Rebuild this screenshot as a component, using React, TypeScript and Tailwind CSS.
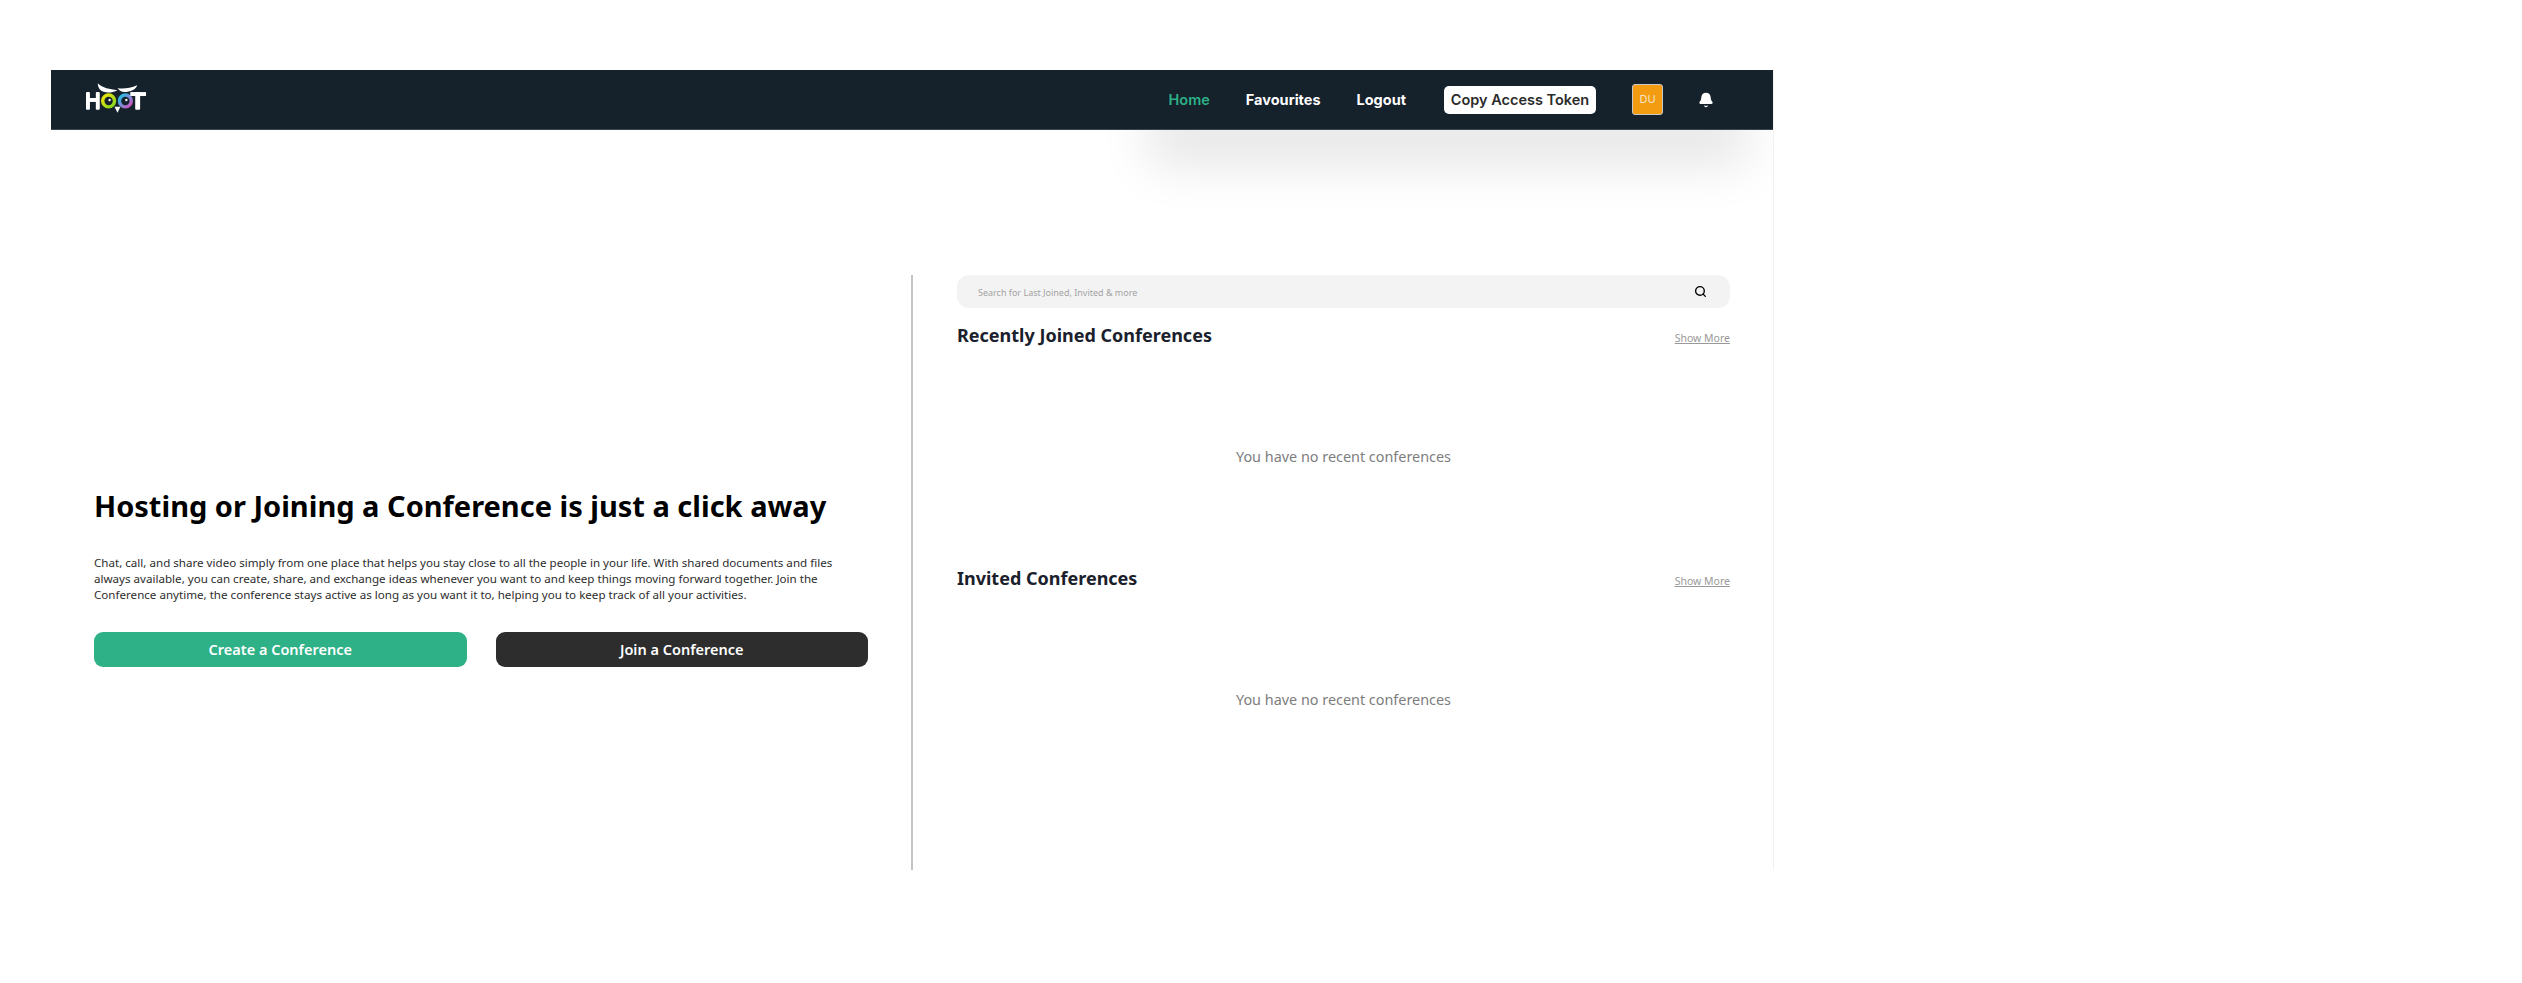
import React from 'react';
import { Search, Bell } from 'lucide-react';

const noto = { fontFamily: '"Noto Sans", sans-serif' };

function Logo() {
  return (
    <svg className="mb-[4px]" width="63" height="32" viewBox="0 0 64 32" fill="none">
      <defs>
        <linearGradient id="eyeLeft" x1="0" y1="0" x2="1" y2="1">
          <stop offset="0" stopColor="#f5e50a" />
          <stop offset="1" stopColor="#7ed321" />
        </linearGradient>
        <linearGradient id="eyeRight" x1="0" y1="0" x2="1" y2="1">
          <stop offset="0" stopColor="#19c6e6" />
          <stop offset="1" stopColor="#d94fc0" />
        </linearGradient>
      </defs>
      {/* H */}
      <rect x="1" y="10" width="4" height="18" rx="1" fill="#fff" />
      <rect x="11" y="10" width="4" height="18" rx="1" fill="#fff" />
      <rect x="4" y="16" width="8" height="4" fill="#fff" />
      {/* brows */}
      <path d="M13 1 C18 6 25 7 33 8 C28 11 20 11 17 9 C14 7 13 4 13 1Z" fill="#fff" />
      <path d="M33 6 C39 7 46 6 53 3 C52 7 46 10 40 10 C37 10 35 8 33 6Z" fill="#fff" />
      {/* eyes */}
      <circle cx="24" cy="19" r="6" stroke="url(#eyeLeft)" strokeWidth="3.5" />
      <circle cx="41" cy="19" r="6" stroke="url(#eyeRight)" strokeWidth="3.5" />
      <circle cx="24" cy="19" r="2.5" fill="#15212b" />
      <circle cx="41" cy="19" r="2.5" fill="#15212b" />
      <circle cx="25" cy="18" r="1.2" fill="#fff" />
      <circle cx="42" cy="18" r="1.2" fill="#fff" />
      <path d="M30 25 L36 25 L33 31Z" fill="#fff" />
      {/* T */}
      <rect x="46" y="10" width="16" height="4" fill="#fff" />
      <rect x="51" y="10" width="5" height="18" rx="1" fill="#fff" />
    </svg>
  );
}

function Section({ title }: { title: string }) {
  return (
    <div className="h-[243px]">
      <div className="flex items-center justify-between">
        <h2 className="text-[18px] leading-[26px] font-bold text-[#1a202c]">{title}</h2>
        <a className="text-[10.5px] leading-4 mt-[6px] text-[#999999] underline">Show More</a>
      </div>
      <p className="mt-[99px] text-center text-[14.4px] leading-5 text-[#7d7d7d]">You have no recent conferences</p>
    </div>
  );
}

export default function App() {
  return (
    <div className="min-h-[983px] bg-white pl-[51px] pt-[70px]">
      <div className="relative w-[1723px] h-[800px] overflow-hidden border-r border-[#f1f1f1]" style={noto}>
        {/* empty notification panel behind the header, only its shadow shows */}
        <div className="absolute right-[25px] top-0 w-[600px] h-[60px] shadow-[0_35px_50px_rgba(0,0,0,0.10)]" />

        <header className="relative flex h-[60px] items-center justify-between bg-[#15212b] border-b border-[#3a454e] pl-[34px] pr-[59px]" style={{ fontFamily: 'Inter, sans-serif' }}>
          <Logo />
          <nav className="flex items-center text-[14.5px] font-semibold text-white">
            <a className="text-[#2eb186]">Home</a>
            <a className="ml-[36px] font-bold">Favourites</a>
            <a className="ml-[36px] font-bold">Logout</a>
            <button className="ml-[38px] h-[28px] w-[152px] rounded-[5px] bg-white text-[14.5px] font-semibold text-[#2b2b2b]">Copy Access Token</button>
            <div className="ml-[36px] flex h-[31px] w-[31px] items-center justify-center rounded-[3px] border border-[#c9c9c9] bg-[#f39c12] text-[11px] font-normal text-[#f6e3c0]">DU</div>
            <Bell className="ml-[35px] h-[16px] w-[16px] fill-white text-white" />
          </nav>
        </header>

        <main className="relative flex pt-[145px]">
          <section className="flex h-[595px] w-[860px] flex-col justify-center pl-[43px] pr-[43px] pt-[8px]">
            <h1 className="text-[29px] leading-[40px] font-bold text-black">Hosting or Joining a Conference is just a click away</h1>
            <p className="mt-[29px] text-[11.6px] leading-[16px] text-[#2d2d2d]">
              Chat, call, and share video simply from one place that helps you stay close to all the people in your life. With shared documents and files always available, you can create, share, and exchange ideas whenever you want to and keep things moving forward together. Join the Conference anytime, the conference stays active as long as you want it to, helping you to keep track of all your activities.
            </p>
            <div className="mt-[29px] flex gap-[29px]">
              <button className="h-[35px] flex-1 rounded-[9px] bg-[#2eb186] text-[14.5px] font-semibold text-white">Create a Conference</button>
              <button className="h-[35px] flex-1 rounded-[9px] bg-[#2d2d2d] text-[14.5px] font-semibold text-white">Join a Conference</button>
            </div>
          </section>

          <section className="h-[595px] flex-1 border-l-2 border-[#c4c4c4] pl-[44px] pr-[43px]">
            <div className="flex h-[33px] items-center justify-between rounded-[12px] bg-[#f3f3f3] pl-[21px] pr-[23px]">
              <span className="pt-[2px] text-[9px] text-[#a3a3a3]">Search for Last Joined, Invited &amp; more</span>
              <Search className="h-[13px] w-[13px] text-black" strokeWidth={2.5} />
            </div>
            <div className="mt-[14px]">
              <Section title="Recently Joined Conferences" />
              <Section title="Invited Conferences" />
            </div>
          </section>
        </main>
      </div>
    </div>
  );
}
